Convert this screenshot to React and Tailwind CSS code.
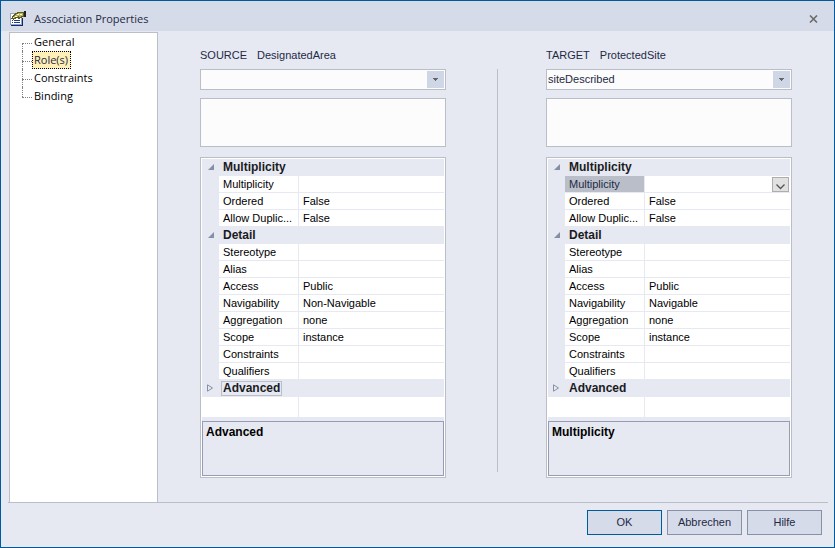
const source = {
  id: "source",
  heading: "SOURCE",
  element: "DesignatedArea",
  role: "",
  navigability: "Non-Navigable",
  description: "Advanced",
};

const target = {
  id: "target",
  heading: "TARGET",
  element: "ProtectedSite",
  role: "siteDescribed",
  navigability: "Navigable",
  description: "Multiplicity",
};

function TitleIcon() {
  return (
    <svg width="18" height="16" viewBox="0 0 18 16" shapeRendering="crispEdges" aria-hidden="true">
      <path d="M0 2h12v12H0z" fill="#8fa3cc" />
      <path d="M1 3h10v10H1z" fill="#fff" />
      <path d="M12 7h1v7h-1zM1 14h12v1H1z" fill="#16296b" />
      <path d="M2 9h1v1H2zM2 11h1v1H2zM4 9h6v1H4zM4 11h6v1H4z" fill="#1d3a8c" />
      <path d="M1 7h1V5h1V4h1V3h1V2h2V1h7v1h1v4h-3v1h-2v1H8V7H6v1H4v1H3V8H1z" fill="#5d5b20" />
      <path d="M3 6h1V5h1V4h1V3h2V2h5v3h-2v1H9V5H8v1H5v1H3z" fill="#b9b45c" />
      <path d="M7 3h2v1H7zM5 5h2v1H5zM10 3h2v1h-2zM3 6h1v1H3z" fill="#fffbd0" />
      <path d="M14 0h2v6h-2z" fill="#222" />
    </svg>
  );
}

function Tree() {
  const items = ["General", "Role(s)", "Constraints", "Binding"];
  return (
    <nav className="w-[149px] shrink-0 border-x border-t border-[#b9bec9] bg-white pl-3">
      <ul className="font-['Open_Sans',sans-serif] text-[11px] leading-[18px] text-black">
        {items.map((item, i) => (
          <li key={item} className="flex h-[18px] items-center">
            <span className="flex h-full w-[10px] flex-col" aria-hidden="true">
              <span className={i === 0 ? "h-[10px]" : "h-[10px] border-l border-dotted border-[#808080]"} />
              <span
                className={
                  i === items.length - 1
                    ? "h-2 border-t border-dotted border-[#808080]"
                    : "h-2 border-t border-l border-dotted border-[#808080]"
                }
              />
            </span>
            <a
              href="#"
              className={
                item === "Role(s)"
                  ? "border border-dotted border-black bg-[#fff0b8] pr-0.5 pl-px leading-4 text-[#1e2a44]"
                  : "px-0.5"
              }
            >
              {item}
            </a>
          </li>
        ))}
      </ul>
    </nav>
  );
}

function GroupRow({ label, open = true, focused = false }) {
  return (
    <tr className="h-[17px] bg-[#e6e9f2]">
      <td className="p-0">
        <svg className="mb-0.5 ml-[5px]" width="8" height="8" viewBox="0 0 8 8" aria-hidden="true">
          {open ? (
            <path d="M7 1v6H1z" fill="#8590a6" />
          ) : (
            <path d="M0.5 0.8v6.4L5.5 4z" fill="none" stroke="#8590a6" />
          )}
        </svg>
      </td>
      <th colSpan={2} className="p-0 pl-0.5 text-left text-[12px] leading-[15px] font-bold text-[#1b1b1f]">
        <span className={focused ? "block w-fit border border-[#b9bec9] px-px leading-[13px]" : "block px-0.5"}>{label}</span>
      </th>
    </tr>
  );
}

function PropertyRow({ label, value, selected = false }) {
  return (
    <tr className="h-[17px] bg-white">
      <td className="bg-[#e6e9f2] p-0" />
      <th
        className={
          selected
            ? "border-r border-b border-[#e6e9f2] bg-[#b9bec9] p-0 px-1 text-left font-normal text-[#1e2a44]"
            : "border-r border-b border-[#e6e9f2] p-0 px-1 text-left font-normal"
        }
      >
        <span className="block whitespace-nowrap">{label}</span>
      </th>
      <td className="border-b border-[#e6e9f2] p-0 pl-1">
        {selected ? (
          <button className="mt-px mr-px ml-auto flex h-[15px] w-[17px] items-end justify-center border border-[#adadad] bg-[#e1e1e1] pb-px" aria-label="Open list">
            <svg width="9" height="6" viewBox="0 0 9 6" aria-hidden="true">
              <path d="M0.5 0.5l4 4 4-4" fill="none" stroke="#555" strokeWidth="1.3" />
            </svg>
          </button>
        ) : (
          value
        )}
      </td>
    </tr>
  );
}

function PropertyGrid({ end }) {
  const isTarget = end.id === "target";
  return (
    <div className="mt-[10px] border border-[#b9bec9] bg-white p-px">
      <table className="w-full table-fixed border-separate border-spacing-0 text-[11px] leading-4 text-black">
        <colgroup>
          <col className="w-[17px]" />
          <col className="w-[80px]" />
          <col />
        </colgroup>
        <tbody>
          <GroupRow label="Multiplicity" />
          <PropertyRow label="Multiplicity" value="" selected={isTarget} />
          <PropertyRow label="Ordered" value="False" />
          <PropertyRow label="Allow Duplic..." value="False" />
          <GroupRow label="Detail" />
          <PropertyRow label="Stereotype" value="" />
          <PropertyRow label="Alias" value="" />
          <PropertyRow label="Access" value="Public" />
          <PropertyRow label="Navigability" value={end.navigability} />
          <PropertyRow label="Aggregation" value="none" />
          <PropertyRow label="Scope" value="instance" />
          <PropertyRow label="Constraints" value="" />
          <PropertyRow label="Qualifiers" value="" />
          <GroupRow label="Advanced" open={false} focused={!isTarget} />
          <tr className="h-5">
            <td colSpan={2} className="border-r border-[#e6e9f2] p-0" />
            <td className="p-0" />
          </tr>
        </tbody>
      </table>
      <div className="h-1 bg-[#e6e9f2]" />
      <div className="h-[55px] border border-[#969db3] bg-[#e6e9f2] px-[3px] py-0.5 text-[12px] leading-4 font-bold text-black">
        {end.description}
      </div>
    </div>
  );
}

function RoleEnd({ end }) {
  return (
    <section className="min-w-0 flex-1">
      <h2 className="flex h-4 gap-2.5 text-[11px] leading-4 text-[#1e2a44]">
        <label htmlFor={end.id + "-role"}>{end.heading}</label>
        <span>{end.element}</span>
      </h2>
      <div className="relative mt-1.5 border border-[#b9bec9] bg-[#fcfcfc] p-px">
        <select id={end.id + "-role"} className="block h-[17px] w-full appearance-none bg-transparent pr-5 text-[11px] leading-[17px] text-[#1e2a44]">
          <option>{end.role}</option>
        </select>
        <span className="pointer-events-none absolute top-px right-px flex size-[17px] items-center justify-center bg-[#cfd6e5]">
          <svg width="5" height="3" viewBox="0 0 5 3" shapeRendering="crispEdges" aria-hidden="true">
            <path d="M0 0h5v1H4v1H3v1H2V2H1V1H0z" fill="#666" />
          </svg>
        </span>
      </div>
      <textarea aria-label={end.heading + " notes"} className="mt-2 block h-[49px] w-full resize-none border border-[#b9bec9] bg-[#fcfcfc]" />
      <PropertyGrid end={end} />
    </section>
  );
}

export default function App() {
  return (
    <div className="flex min-h-screen flex-col border border-[#005a9e] bg-[#e6e9f2] font-['Liberation_Sans',Arial,sans-serif]">
      <header className="flex h-[30px] shrink-0 items-center bg-[#d6dbe9] pt-1.5 pr-4 pl-[9px]">
        <TitleIcon />
        <h1 className="ml-1.5 flex-1 font-['Open_Sans',sans-serif] text-[11px] leading-4 text-[#1e2a44]">Association Properties</h1>
        <button className="p-0" aria-label="Close">
          <svg width="9" height="8" viewBox="0 0 9 8" aria-hidden="true">
            <path d="M1 0.500l7 7M8 0.500l-7 7" stroke="#6b6b6b" strokeWidth="1.600" />
          </svg>
        </button>
      </header>
      <main className="flex flex-1 pt-px pl-2">
        <Tree />
        <div className="flex flex-1 px-[42px] pt-[15px] pb-6">
          <RoleEnd end={source} />
          <div className="mt-[22px] mr-12 mb-1.5 ml-[51px] w-px bg-[#b9bec9]" />
          <RoleEnd end={target} />
        </div>
      </main>
      <footer className="mr-1.5 ml-[7px] flex justify-end gap-[5px] border-t border-[#b9bec9] pt-[7px] pr-[6px] pb-[12px] text-[11px] text-[#1e2a44]">
        <button className="h-[25px] w-[75px] border border-[#005a9e] bg-[#d6dbe9]">OK</button>
        <button className="h-[25px] w-[75px] border border-[#8791a8] bg-[#d6dbe9]">Abbrechen</button>
        <button className="h-[25px] w-[75px] border border-[#8791a8] bg-[#d6dbe9]">Hilfe</button>
      </footer>
    </div>
  );
}
